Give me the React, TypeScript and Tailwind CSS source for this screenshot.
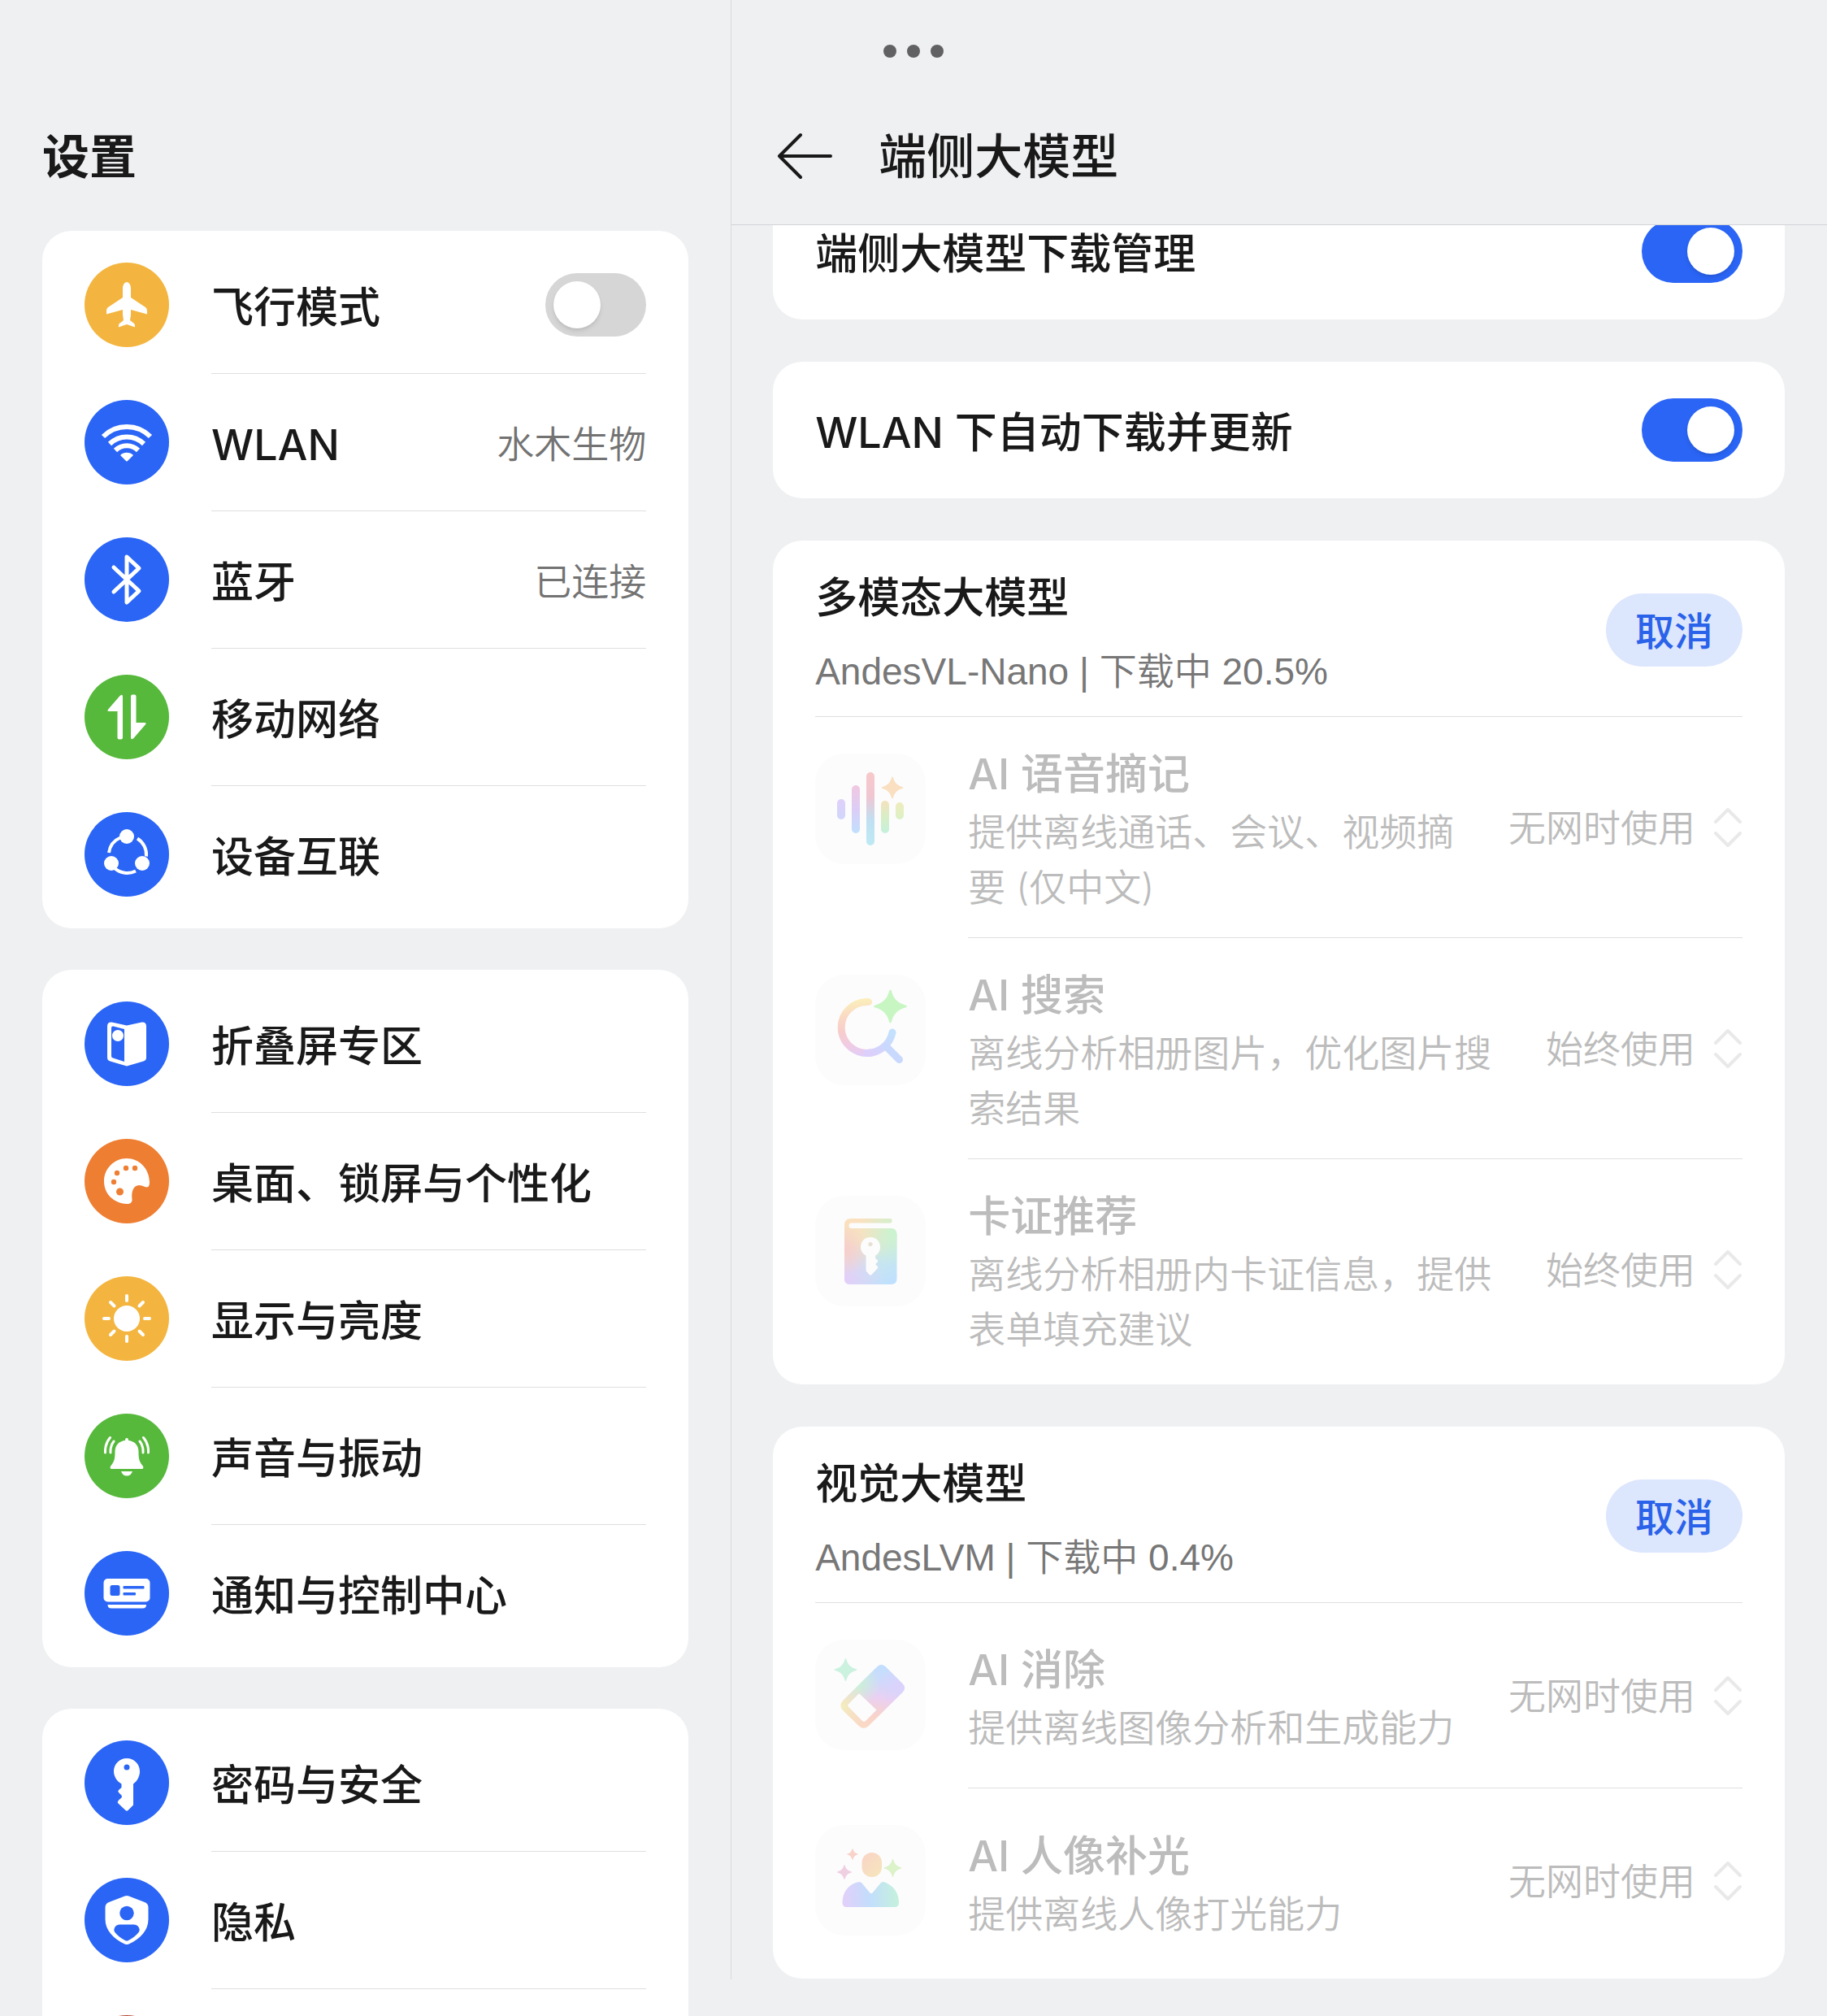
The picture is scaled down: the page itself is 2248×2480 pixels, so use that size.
import { useState, type ReactNode } from "react";

type NavItem = {
  label?: string;
  color: string;
  icon?: ReactNode;
  value?: string;
  toggle?: boolean;
};

type Feature = {
  title: string;
  desc: string;
  mode: string;
  icon: ReactNode;
};

const MODES = ["无网时使用", "始终使用"];

/* ---------- Sidebar glyphs, drawn on a 104 x 104 disc ---------- */

const PlaneIcon = (
  <path
    fill="white"
    d="M52 24c-3 0-5 4-5 8v11L29 55c-1.600 1.200-2 3-2 5v3.500L47 58v6l1 7-5 4c-1 1-1.200 2.500-1 4.500L52 76l10 3.500c.2-2 0-3.500-1-4.500l-5-4 1-7v-6l20 5.500V60c0-2-.4-3.800-2-5L57 43V32c0-4-2-8-5-8z"
  />
);

const WifiIcon = (
  <>
    <g fill="none" stroke="white" strokeWidth="6">
      <path d="M23 45a41 41 0 0 1 58 0" />
      <path d="M31 54a30 30 0 0 1 42 0" />
      <path d="M38 62a20 20 0 0 1 28 0" />
    </g>
    <path fill="white" d="M44 68a11.500 11.500 0 0 1 16 0l-7 7q-1 1-2 0z" />
  </>
);

const BluetoothIcon = (
  <path
    fill="none"
    stroke="white"
    strokeWidth="5"
    strokeLinejoin="round"
    strokeLinecap="round"
    d="M36 37l31 29-15 14V24l15 14-31 29"
  />
);

const MobileIcon = (
  <g fill="white">
    <path d="M47 27v50.500q0 2-2 2h-2.500q-2 0-2-2V45H30q-2.600 0-1-2.200L43.500 26q3.500-3 3.500 1z" />
    <path d="M57 77V26.500q0-2 2-2h2.500q2 0 2 2V59H74q2.600 0 1 2.200L60.500 78q-3.500 3-3.500-1z" />
  </g>
);

const DevicesIcon = (
  <>
    <g fill="none" stroke="white" strokeWidth="4">
      <path d="M30 50a23.500 23.500 0 0 1 14-18.500" />
      <path d="M65 32.500a23.500 23.500 0 0 1 11 22" />
      <path d="M37 69a23.500 23.500 0 0 0 26 3.500" />
    </g>
    <circle cx="52" cy="30" r="9" fill="white" />
    <circle cx="33" cy="63" r="9" fill="white" />
    <circle cx="71" cy="63" r="9" fill="white" />
  </>
);

const FoldIcon = (
  <>
    <path
      fill="white"
      fillRule="evenodd"
      d="M33.500 25.500L52 29.500l18.500-4q5.500-.5 5.500 5V69q0 3.500-3.500 4.500L52 79.500l-20.500-6Q28 72.500 28 69V30.500q0-5.500 5.500-5zM35.500 30.500q-2.500-.5-2.500 2V67q0 2 2 2.500l14 4.500V34z"
    />
    <circle cx="41" cy="42" r="7" fill="white" />
  </>
);

const PaletteIcon = (
  <>
    <path
      fill="white"
      d="M52 24c-16 0-28 13-28 28 0 16 12 27 28 28 5 .3 7-2.500 6.500-6-1-8 1-17 9-17 4 0 6 2.500 9 2.500s3.500-3.500 3.500-6.500C79.500 36 67 24 52 24z"
    />
    <g fill="#ee7e32">
      <circle cx="51" cy="36" r="3.200" />
      <circle cx="62" cy="36" r="3.200" />
      <circle cx="40" cy="42" r="3.200" />
      <circle cx="36" cy="53" r="3.200" />
      <circle cx="43.500" cy="65" r="4.500" />
    </g>
  </>
);

const SunIcon = (
  <>
    <circle cx="52" cy="52" r="16" fill="white" />
    <g stroke="white" strokeWidth="4" strokeLinecap="round">
      <path d="M52 24v6M52 74v6M24 52h6M74 52h6M32 32l4.500 4.500M67.500 67.500L72 72M72 32l-4.500 4.500M36.500 67.500L32 72" />
    </g>
  </>
);

const BellIcon = (
  <>
    <path
      fill="white"
      d="M52 30c-1.500 0-2 1-2 3-8 1-12.500 6-12.500 14 0 9-1 12-5 17-1.500 2-1 4 1 4h37c2 0 2.500-2 1-4-4-5-5-8-5-17 0-8-4.500-13-12.500-14 0-2-.5-3-2-3zM45 71h14q-2 5.500-7 5.500T45 71z"
    />
    <g fill="none" stroke="white" strokeWidth="3" strokeLinecap="round">
      <path d="M31.500 29.500Q25 37 25.500 48M36 34q-4.500 6-4 14" />
      <path d="M72.500 29.500Q79 37 78.500 48M68 34q4.500 6 4 14" />
    </g>
  </>
);

const NoticeIcon = (
  <>
    <rect x="23.500" y="34" width="57" height="28.500" rx="5" fill="white" />
    <path fill="white" d="M28.500 66h47.500q0 4.500-4.500 4.500h-38.500q-4.500 0-4.500-4.500z" />
    <g fill="#2a65f6">
      <rect x="31.500" y="42" width="12" height="13" rx="2.500" />
      <rect x="47.500" y="43" width="26" height="3.500" rx="1" />
      <rect x="47.500" y="51" width="15.500" height="3.500" rx="1" />
    </g>
  </>
);

const KeyIcon = (
  <path
    fill="white"
    fillRule="evenodd"
    d="M52 22c-9 0-16 7-16 16 0 6 3.500 12 9.500 15.500V58l-3.500 3q-1.500 1.500 0 3l3.500 3.500q1 1.500 0 3L42 73.500q-2 2-.5 4L50.500 86q1.500 1.500 3 0l6.500-6.500V53.500c5-3.500 8-9.500 8-15.500 0-9-7-16-16-16zm0 7.500a3.500 3.500 0 1 1 0 7 3.500 3.500 0 0 1 0-7z"
  />
);

const PrivacyIcon = (
  <>
    <path
      fill="white"
      d="M49.500 22.500q2.500-1.200 5 0L74 30q4.500 1.500 4.500 7v14c0 14-10 24-24 30.500q-2.500 1-5 0C36 75 25.500 65 25.500 51V37q0-5.500 4.500-7z"
    />
    <circle cx="52" cy="43.500" r="8.700" fill="#2a65f6" />
    <path
      fill="#2a65f6"
      d="M43.500 57.500h17c3 0 5 1 6.500 4q1.500 2.500 0 5c-3 4.500-7.500 7.500-13 10.500q-2 1-4 0c-5.500-3-10-6-13-10.500q-1.500-2.500 0-5c1.500-3 3.500-4 6.500-4z"
    />
  </>
);

const navGroups: NavItem[][] = [
  [
    { label: "飞行模式", color: "bg-[#f3b53f]", icon: PlaneIcon, toggle: true },
    { label: "WLAN", color: "bg-[#2a65f6]", icon: WifiIcon, value: "水木生物" },
    { label: "蓝牙", color: "bg-[#2a65f6]", icon: BluetoothIcon, value: "已连接" },
    { label: "移动网络", color: "bg-[#56b93b]", icon: MobileIcon },
    { label: "设备互联", color: "bg-[#2a65f6]", icon: DevicesIcon },
  ],
  [
    { label: "折叠屏专区", color: "bg-[#2a65f6]", icon: FoldIcon },
    { label: "桌面、锁屏与个性化", color: "bg-[#ee7e32]", icon: PaletteIcon },
    { label: "显示与亮度", color: "bg-[#f3b53f]", icon: SunIcon },
    { label: "声音与振动", color: "bg-[#56b93b]", icon: BellIcon },
    { label: "通知与控制中心", color: "bg-[#2a65f6]", icon: NoticeIcon },
  ],
  [
    { label: "密码与安全", color: "bg-[#2a65f6]", icon: KeyIcon },
    { label: "隐私", color: "bg-[#2a65f6]", icon: PrivacyIcon },
    { color: "bg-[#b5452f]" },
  ],
];

/* ---------- Feature glyphs, drawn on a 136 x 136 tile ---------- */

const Gradient = ({ id, stops, box }: { id: string; stops: string[]; box: number[] }) => (
  <linearGradient id={id} gradientUnits="userSpaceOnUse" x1={box[0]} y1={box[1]} x2={box[2]} y2={box[3]}>
    {stops.map((color, i) => (
      <stop key={i} offset={i / (stops.length - 1)} stopColor={color} />
    ))}
  </linearGradient>
);

const Glow = ({ id, x, y, r, color }: { id: string; x: number; y: number; r: number; color: string }) => (
  <radialGradient id={id} gradientUnits="userSpaceOnUse" cx={x} cy={y} r={r}>
    <stop offset="0" stopColor={color} />
    <stop offset="1" stopColor={color} stopOpacity="0" />
  </radialGradient>
);

const Star = ({ x, y, r, fill }: { x: number; y: number; r: number; fill: string }) => (
  <path
    transform={`translate(${x} ${y}) scale(${r / 20})`}
    fill={fill}
    d="M0-20Q1-20 1.500-18C4-9 9-4 18-1.500q2 .5 2 1.500t-2 1.500C9 4 4 9 1.500 18Q1 20 0 20t-1.500-2C-4 9-9 4-18 1.500q-2-.5-2-1.500t2-1.500C-9-4-4-9-1.500-18Q-1-20 0-20z"
  />
);

const VoiceIcon = (
  <>
    <defs>
      <Gradient id="v1" box={[0, 56, 0, 81]} stops={["#e0d0fa", "#d0d6fc"]} />
      <Gradient id="v2" box={[0, 39, 0, 98]} stops={["#f1c8e0", "#dccdf6", "#c0e0fd"]} />
      <Gradient id="v3" box={[0, 23, 0, 113]} stops={["#f7c9c9", "#f0c6d2", "#bfe0f2", "#bdeaf3"]} />
      <Gradient id="v4" box={[0, 58, 0, 98]} stops={["#f5e2bd", "#d8eec6", "#c5f1dc"]} />
      <Gradient id="v5" box={[0, 60, 0, 81]} stops={["#f0ecbd", "#daf1c5"]} />
    </defs>
    <rect x="27" y="56" width="10" height="25" rx="5" fill="url(#v1)" />
    <rect x="45" y="39" width="10" height="59" rx="5" fill="url(#v2)" />
    <rect x="63" y="23" width="10" height="90" rx="5" fill="url(#v3)" />
    <rect x="81" y="58" width="10" height="40" rx="5" fill="url(#v4)" />
    <rect x="99" y="60" width="10" height="21" rx="5" fill="url(#v5)" />
    <Star x={95} y={42} r={13.5} fill="#fadfc0" />
  </>
);

const SearchIcon = (
  <>
    <defs>
      <Gradient id="s1" box={[66, 30, 74, 102]} stops={["#fbeebb", "#fad9c4", "#f7cdcb", "#f0cbe4", "#dccffc"]} />
      <Gradient id="s2" box={[80, 20, 100, 60]} stops={["#c8f6c2", "#c5f0e4"]} />
      <Gradient id="s3" box={[70, 100, 95, 74]} stops={["#dccffc", "#cfd6fd", "#c3e0fd"]} />
    </defs>
    <path
      fill="none"
      stroke="url(#s1)"
      strokeWidth="9"
      strokeLinecap="round"
      d="M65.500 33.500A31.500 31.500 0 1 0 69 96"
    />
    <path
      fill="none"
      stroke="url(#s3)"
      strokeWidth="9"
      strokeLinecap="round"
      strokeLinejoin="round"
      d="M64 96.500A31.500 31.500 0 0 0 95 71"
    />
    <path fill="none" stroke="#c9d9fd" strokeWidth="9" strokeLinecap="round" d="M87.500 88.500l16 16" />
    <Star x={92.5} y={39} r={20.5} fill="url(#s2)" />
  </>
);

const CardIcon = (
  <>
    <defs>
      <Gradient id="c1" box={[44, 28, 92, 109]} stops={["#fbe0bd", "#f3e3c4", "#c8e6ee", "#bfe0fe"]} />
      <Glow id="c2" x={98} y={44} r={42} color="#c9f4cf" />
      <Glow id="c3" x={36} y={104} r={50} color="#e4cdfa" />
      <Glow id="c4" x={34} y={66} r={32} color="#f7cdcb" />
      <path
        id="book"
        d="M44 28h48q2.500 0 2.500 2.800t-2.500 2.800H44.500q-3 0-3 3.200t3 3.200H93q7.500 0 7.500 7.500V102q0 7-7 7H43q-7 0-7-7V36q0-8 8-8z"
      />
    </defs>
    <use href="#book" fill="url(#c1)" />
    <use href="#book" fill="url(#c2)" />
    <use href="#book" fill="url(#c3)" />
    <use href="#book" fill="url(#c4)" />
    <path
      fill="#fcfcfd"
      d="M68 51c-7 0-12 5-12 12 0 4.500 2.500 8.500 6.500 10.500V91q0 1.500 1 2.500l3 3.500q1.500 1.500 3 0l7-7.500q1.500-1.500 0-3L74 84l2.500-2q1.500-1.500 0-3L74 76.500v-3c4-2 6-6 6-10.500 0-7-5-12-12-12z"
    />
    <circle cx="68" cy="59.500" r="2.600" fill="#e8e0d2" />
  </>
);

const EraserIcon = (
  <>
    <defs>
      <Gradient id="e1" box={[78, 28, 62, 112]} stops={["#bfe0fd", "#cddafc", "#ead0f2", "#f8d2cc", "#fbdcc2"]} />
      <Glow id="e2" x={52} y={54} r={28} color="#c8f3d4" />
      <Glow id="e3" x={32} y={82} r={34} color="#f3eebb" />
      <Glow id="e4" x={104} y={56} r={26} color="#dcd2fc" />
      <path
        id="eraser"
        fillRule="evenodd"
        d="M86.700 33.300l20.900 20.900q5 5 0 10.500L66.200 105.800q-6.500 6.500-13 0L34.800 87.400q-6.500-6.500 0-13L76.200 33.300q5.200-5.200 10.500 0zM54 66L41 79q-2 2 0 4l17 17q2 2 4 0l13.500-13.500z"
      />
    </defs>
    <use href="#eraser" fill="url(#e1)" />
    <use href="#eraser" fill="url(#e2)" />
    <use href="#eraser" fill="url(#e3)" />
    <use href="#eraser" fill="url(#e4)" />
    <Star x={37.5} y={37} r={14} fill="#cbf1df" />
  </>
);

const PortraitIcon = (
  <>
    <defs>
      <Gradient id="p1" box={[58, 38, 80, 60]} stops={["#f9d5c6", "#f6e4bd"]} />
      <Gradient id="p2" box={[36, 82, 98, 78]} stops={["#e0d0fa", "#c2defc", "#c5efdf"]} />
    </defs>
    <rect x="57.500" y="34" width="24.500" height="30" rx="12" fill="url(#p1)" />
    <path
      fill="url(#p2)"
      d="M57.500 71.500L67 83q2 2.500 4 0l9.500-11.500q1.500-2 4-1.500C96 74 103 83 103 95.500q0 5.500-5.500 5.500H39q-5.500 0-5.500-5.500C33.500 83 41 72.500 54 70q2 0 3.500 1.500z"
    />
    <Star x={46} y={36} r={7} fill="#f8d3ca" />
    <Star x={36} y={58} r={9} fill="#efcfe2" />
    <Star x={95.5} y={53} r={11} fill="#dcf2c8" />
  </>
);

const multimodal: Feature[] = [
  { title: "AI 语音摘记", desc: "提供离线通话、会议、视频摘要 (仅中文)", mode: "无网时使用", icon: VoiceIcon },
  { title: "AI 搜索", desc: "离线分析相册图片，优化图片搜索结果", mode: "始终使用", icon: SearchIcon },
  { title: "卡证推荐", desc: "离线分析相册内卡证信息，提供表单填充建议", mode: "始终使用", icon: CardIcon },
];

const vision: Feature[] = [
  { title: "AI 消除", desc: "提供离线图像分析和生成能力", mode: "无网时使用", icon: EraserIcon },
  { title: "AI 人像补光", desc: "提供离线人像打光能力", mode: "无网时使用", icon: PortraitIcon },
];

const Switch = ({ id, defaultChecked = false }: { id: string; defaultChecked?: boolean }) => {
  const [checked, setChecked] = useState(defaultChecked);
  return (
    <input
      id={id}
      type="checkbox"
      role="switch"
      checked={checked}
      onChange={(e) => setChecked(e.target.checked)}
      className="flex h-[78px] w-[124px] shrink-0 cursor-pointer appearance-none items-center rounded-full bg-[#d6d6d6] px-2.5 before:block before:size-[58px] before:rounded-full before:bg-white before:shadow-md checked:justify-end checked:bg-[#2a65f6]"
    />
  );
};

const NavRow = ({ item, last }: { item: NavItem; last: boolean }) => {
  const body = (
    <>
      <span className={`mb-px size-[104px] shrink-0 rounded-full ${item.color}`}>
        {item.icon && (
          <svg viewBox="0 0 104 104" className="size-full" aria-hidden="true">
            {item.icon}
          </svg>
        )}
      </span>
      <span
        className={`flex h-[169px] flex-1 items-center justify-between border-b ${last ? "border-transparent" : "border-[#dfdfdf]"}`}
      >
        <span className="pt-2 text-[52px] leading-[72px] font-medium text-[#191919]">{item.label}</span>
        {item.value && <span className="pt-1 text-[46px] leading-[68px] font-[350] text-[#737373]">{item.value}</span>}
        {item.toggle && <Switch id="airplane" />}
      </span>
    </>
  );

  return (
    <li>
      {item.toggle ? (
        <label htmlFor="airplane" className="flex items-center gap-[52px]">
          {body}
        </label>
      ) : (
        <a href="#" className="flex items-center gap-[52px]">
          {body}
        </a>
      )}
    </li>
  );
};

const SwitchCard = ({ id, label }: { id: string; label: string }) => (
  <section className="flex h-[168px] items-center justify-between rounded-[36px] bg-white px-[52px]">
    <label htmlFor={id} className="pt-2 text-[52px] leading-[72px] font-medium text-[#191919]">
      {label}
    </label>
    <Switch id={id} defaultChecked />
  </section>
);

const FeatureRow = ({ feature, last }: { feature: Feature; last: boolean }) => {
  const [mode, setMode] = useState(feature.mode);
  return (
    <li className="flex gap-[52px]">
      <span className="mt-[45px] mb-[47px] size-[136px] shrink-0 rounded-[36px] bg-[#fcfcfd]">
        <svg viewBox="0 0 136 136" className="size-full" aria-hidden="true">
          {feature.icon}
        </svg>
      </span>
      <div className={`flex flex-1 items-center gap-[52px] ${last ? "" : "border-b border-[#dfdfdf]"}`}>
        <div className="flex-1 pt-[35px] pb-[28px] text-[#bcbcbc]">
          <h3 className="text-[52px] leading-[72px] font-medium">{feature.title}</h3>
          <p className="text-[46px] leading-[68px] font-[350]">{feature.desc}</p>
        </div>
        <label className="flex shrink-0 items-center gap-[22px]">
          <select
            disabled
            aria-label={feature.title}
            value={mode}
            onChange={(e) => setMode(e.target.value)}
            className="field-sizing-content appearance-none bg-transparent text-[46px] leading-[68px] font-[350] text-[#bcbcbc] disabled:opacity-100"
          >
            {MODES.map((m) => (
              <option key={m}>{m}</option>
            ))}
          </select>
          <svg viewBox="0 0 36 50" className="h-[50px] w-9" fill="none" aria-hidden="true">
            <path
              d="M3 18L18 3l15 15M3 32l15 15 15-15"
              stroke="#e9e9e9"
              strokeWidth="4"
              strokeLinecap="round"
              strokeLinejoin="round"
            />
          </svg>
        </label>
      </div>
    </li>
  );
};

const ModelCard = ({ title, status, features }: { title: string; status: string; features: Feature[] }) => (
  <section className="rounded-[36px] bg-white px-[52px] pb-1.5">
    <div className="flex items-center justify-between border-b border-[#dfdfdf]">
      <div className="pt-[35px] pb-[21px]">
        <h2 className="text-[52px] leading-[72px] font-medium text-[#191919]">{title}</h2>
        <p className="mt-5 font-['Liberation_Sans','Noto_Sans_CJK_SC',sans-serif] text-[46px] leading-[68px] font-[350] text-[#777777]">
          {status}
        </p>
      </div>
      <button
        type="button"
        className="mt-1 h-[90px] rounded-full bg-[#dce6fd] px-9 pt-1 text-[48px] leading-[72px] font-medium text-[#2a62ea]"
      >
        取消
      </button>
    </div>
    <ul>
      {features.map((feature, i) => (
        <FeatureRow key={feature.title} feature={feature} last={i === features.length - 1} />
      ))}
    </ul>
  </section>
);

const App = () => {
  return (
    <div className="relative flex h-screen overflow-hidden bg-[#eff0f2] font-['Inter','Noto_Sans_CJK_SC',sans-serif]" lang="zh-CN">
      {/* Window handle, centred over both panes */}
      <div className="absolute inset-x-0 top-[55px] z-20 flex justify-center gap-[13px]">
        <span className="size-4 rounded-full bg-[#616163]" />
        <span className="size-4 rounded-full bg-[#616163]" />
        <span className="size-4 rounded-full bg-[#616163]" />
      </div>

      {/* Settings list */}
      <nav className="w-2/5 shrink-0 px-[52px]">
        <h1 className="flex h-[284px] items-end pb-[51px] text-[58px] leading-[80px] font-bold text-[#191919]">设置</h1>
        <div className="flex flex-col gap-[51px]">
          {navGroups.map((group, g) => (
            <ul key={g} className="rounded-[36px] bg-white px-[52px] pt-[7px] pb-1.5">
              {group.map((item, i) => (
                <NavRow key={i} item={item} last={i === group.length - 1} />
              ))}
            </ul>
          ))}
        </div>
      </nav>

      {/* Detail pane */}
      <main className="mb-[45px] flex-1 overflow-hidden border-l border-[#d9dadd]">
        <header className="relative z-10 flex h-[277px] items-end gap-[52px] border-b border-[#d2d3d6] bg-[#eff0f2] pr-[52px] pb-[43px] pl-[51px]">
          <button type="button" aria-label="返回" className="flex h-20 items-center">
            <svg viewBox="0 0 78 78" className="size-[78px]" fill="none" aria-hidden="true">
              <path
                d="M34 12L8 38l26 26M8 38h63"
                stroke="#191919"
                strokeWidth="4"
                strokeLinecap="round"
                strokeLinejoin="round"
              />
            </svg>
          </button>
          <h2 className="text-[59px] leading-[80px] font-medium text-[#191919]">端侧大模型</h2>
        </header>

        {/* Scrolled so that the first card slides under the header */}
        <div className="-mt-[52px] flex flex-col gap-[52px] pr-[52px] pl-[51px]">
          <SwitchCard id="manage" label="端侧大模型下载管理" />
          <SwitchCard id="auto-update" label="WLAN 下自动下载并更新" />
          <ModelCard title="多模态大模型" status="AndesVL-Nano | 下载中 20.5%" features={multimodal} />
          <ModelCard title="视觉大模型" status="AndesLVM | 下载中 0.4%" features={vision} />
        </div>
      </main>
    </div>
  );
};

export default App;
